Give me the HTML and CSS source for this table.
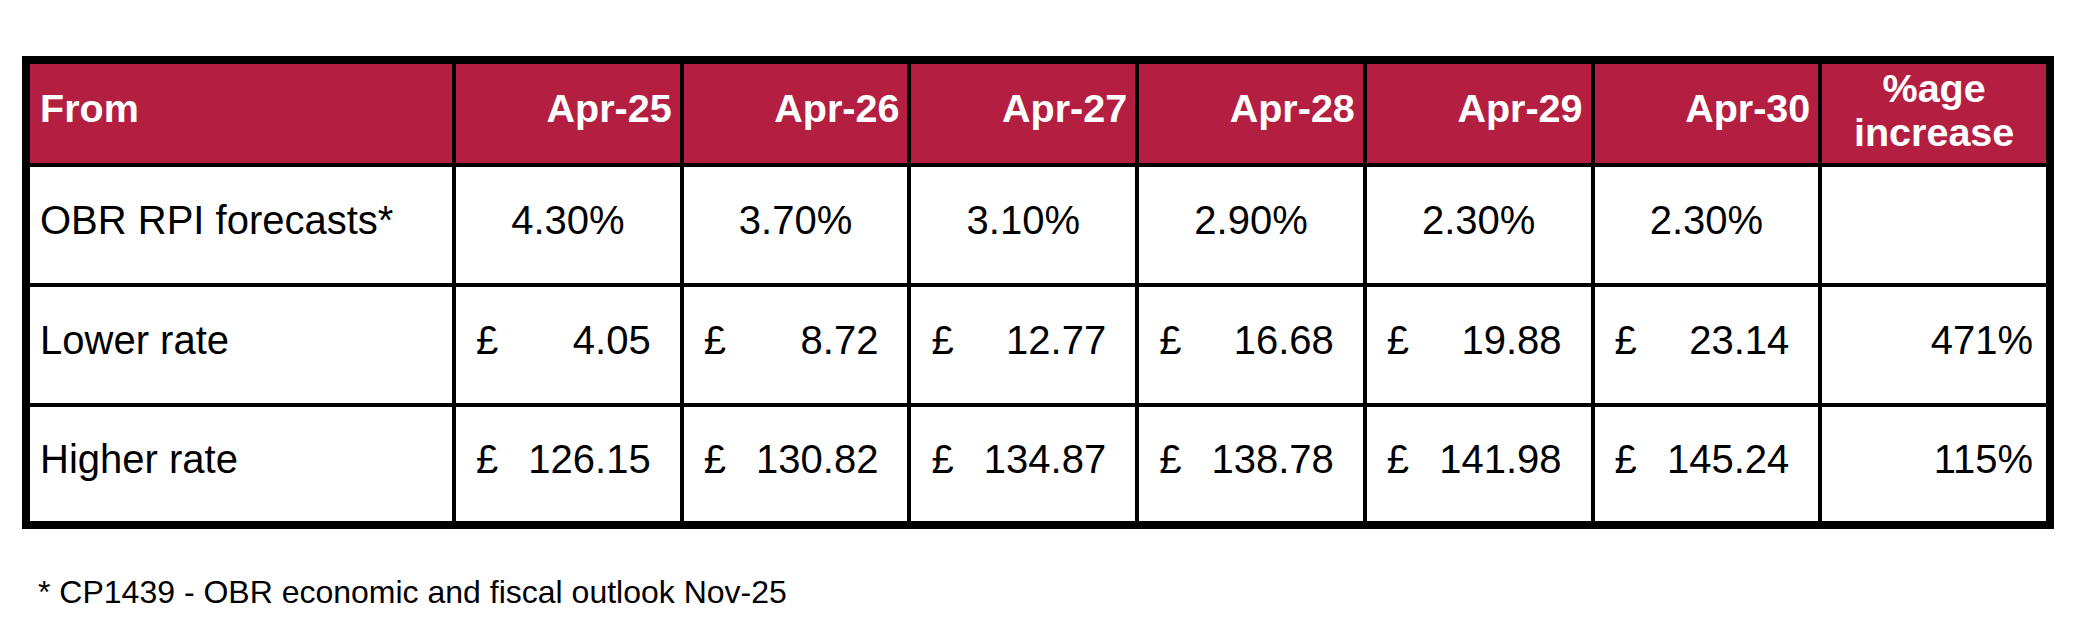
FILE: index.html
```html
<!DOCTYPE html>
<html lang="en">
<head>
<meta charset="utf-8">
<title>RPI forecasts</title>
<link rel="stylesheet" href="styles.css">
</head>
<body>
<div class="page">
  <div class="table" role="table">
    <div class="cell head first">From</div>
    <div class="cell head right">Apr-25</div>
    <div class="cell head right">Apr-26</div>
    <div class="cell head right">Apr-27</div>
    <div class="cell head right">Apr-28</div>
    <div class="cell head right">Apr-29</div>
    <div class="cell head right">Apr-30</div>
    <div class="cell head center two">%age<br>increase</div>

    <div class="cell first">OBR RPI forecasts*</div>
    <div class="cell center">4.30%</div>
    <div class="cell center">3.70%</div>
    <div class="cell center">3.10%</div>
    <div class="cell center">2.90%</div>
    <div class="cell center">2.30%</div>
    <div class="cell center">2.30%</div>
    <div class="cell"></div>

    <div class="cell first">Lower rate</div>
    <div class="cell money"><span>£</span><span>4.05</span></div>
    <div class="cell money"><span>£</span><span>8.72</span></div>
    <div class="cell money"><span>£</span><span>12.77</span></div>
    <div class="cell money"><span>£</span><span>16.68</span></div>
    <div class="cell money"><span>£</span><span>19.88</span></div>
    <div class="cell money"><span>£</span><span>23.14</span></div>
    <div class="cell pct">471%</div>

    <div class="cell first">Higher rate</div>
    <div class="cell money"><span>£</span><span>126.15</span></div>
    <div class="cell money"><span>£</span><span>130.82</span></div>
    <div class="cell money"><span>£</span><span>134.87</span></div>
    <div class="cell money"><span>£</span><span>138.78</span></div>
    <div class="cell money"><span>£</span><span>141.98</span></div>
    <div class="cell money"><span>£</span><span>145.24</span></div>
    <div class="cell pct">115%</div>
  </div>
  <p class="note">* CP1439 - OBR economic and fiscal outlook Nov-25</p>
</div>
</body>
</html>
```

FILE: styles.css
```css
html, body {
  margin: 0;
  padding: 0;
  background: #ffffff;
}

body {
  font-family: "Liberation Sans", Arial, Helvetica, sans-serif;
  color: #000000;
}

.page {
  padding: 56px 0 0 22px;
}

.table {
  box-sizing: border-box;
  width: 2032px;
  display: grid;
  grid-template-columns: 422px repeat(7, 1fr);
  grid-template-rows: 99px 116px 116px 114px;
  gap: 4px;
  padding: 8px;
  background: #000000;
}

.cell {
  box-sizing: border-box;
  background: #ffffff;
  font-size: 40px;
  display: flex;
  align-items: center;
  padding: 0 12px 10px 12px;
  white-space: nowrap;
}

.head {
  background: #b41f41;
  color: #ffffff;
  font-weight: bold;
  font-size: 39.5px;
}

.first {
  padding-left: 10px;
}

.right {
  justify-content: flex-end;
  padding-right: 8px;
}

.center {
  justify-content: center;
  text-align: center;
}

.two {
  line-height: 44px;
  padding-bottom: 8px;
}

.money {
  justify-content: space-between;
  padding-left: 20px;
  padding-right: 29px;
}

.pct {
  justify-content: flex-end;
  padding-right: 13px;
}

.note {
  margin: 45px 0 0 16px;
  font-size: 32px;
}
```
